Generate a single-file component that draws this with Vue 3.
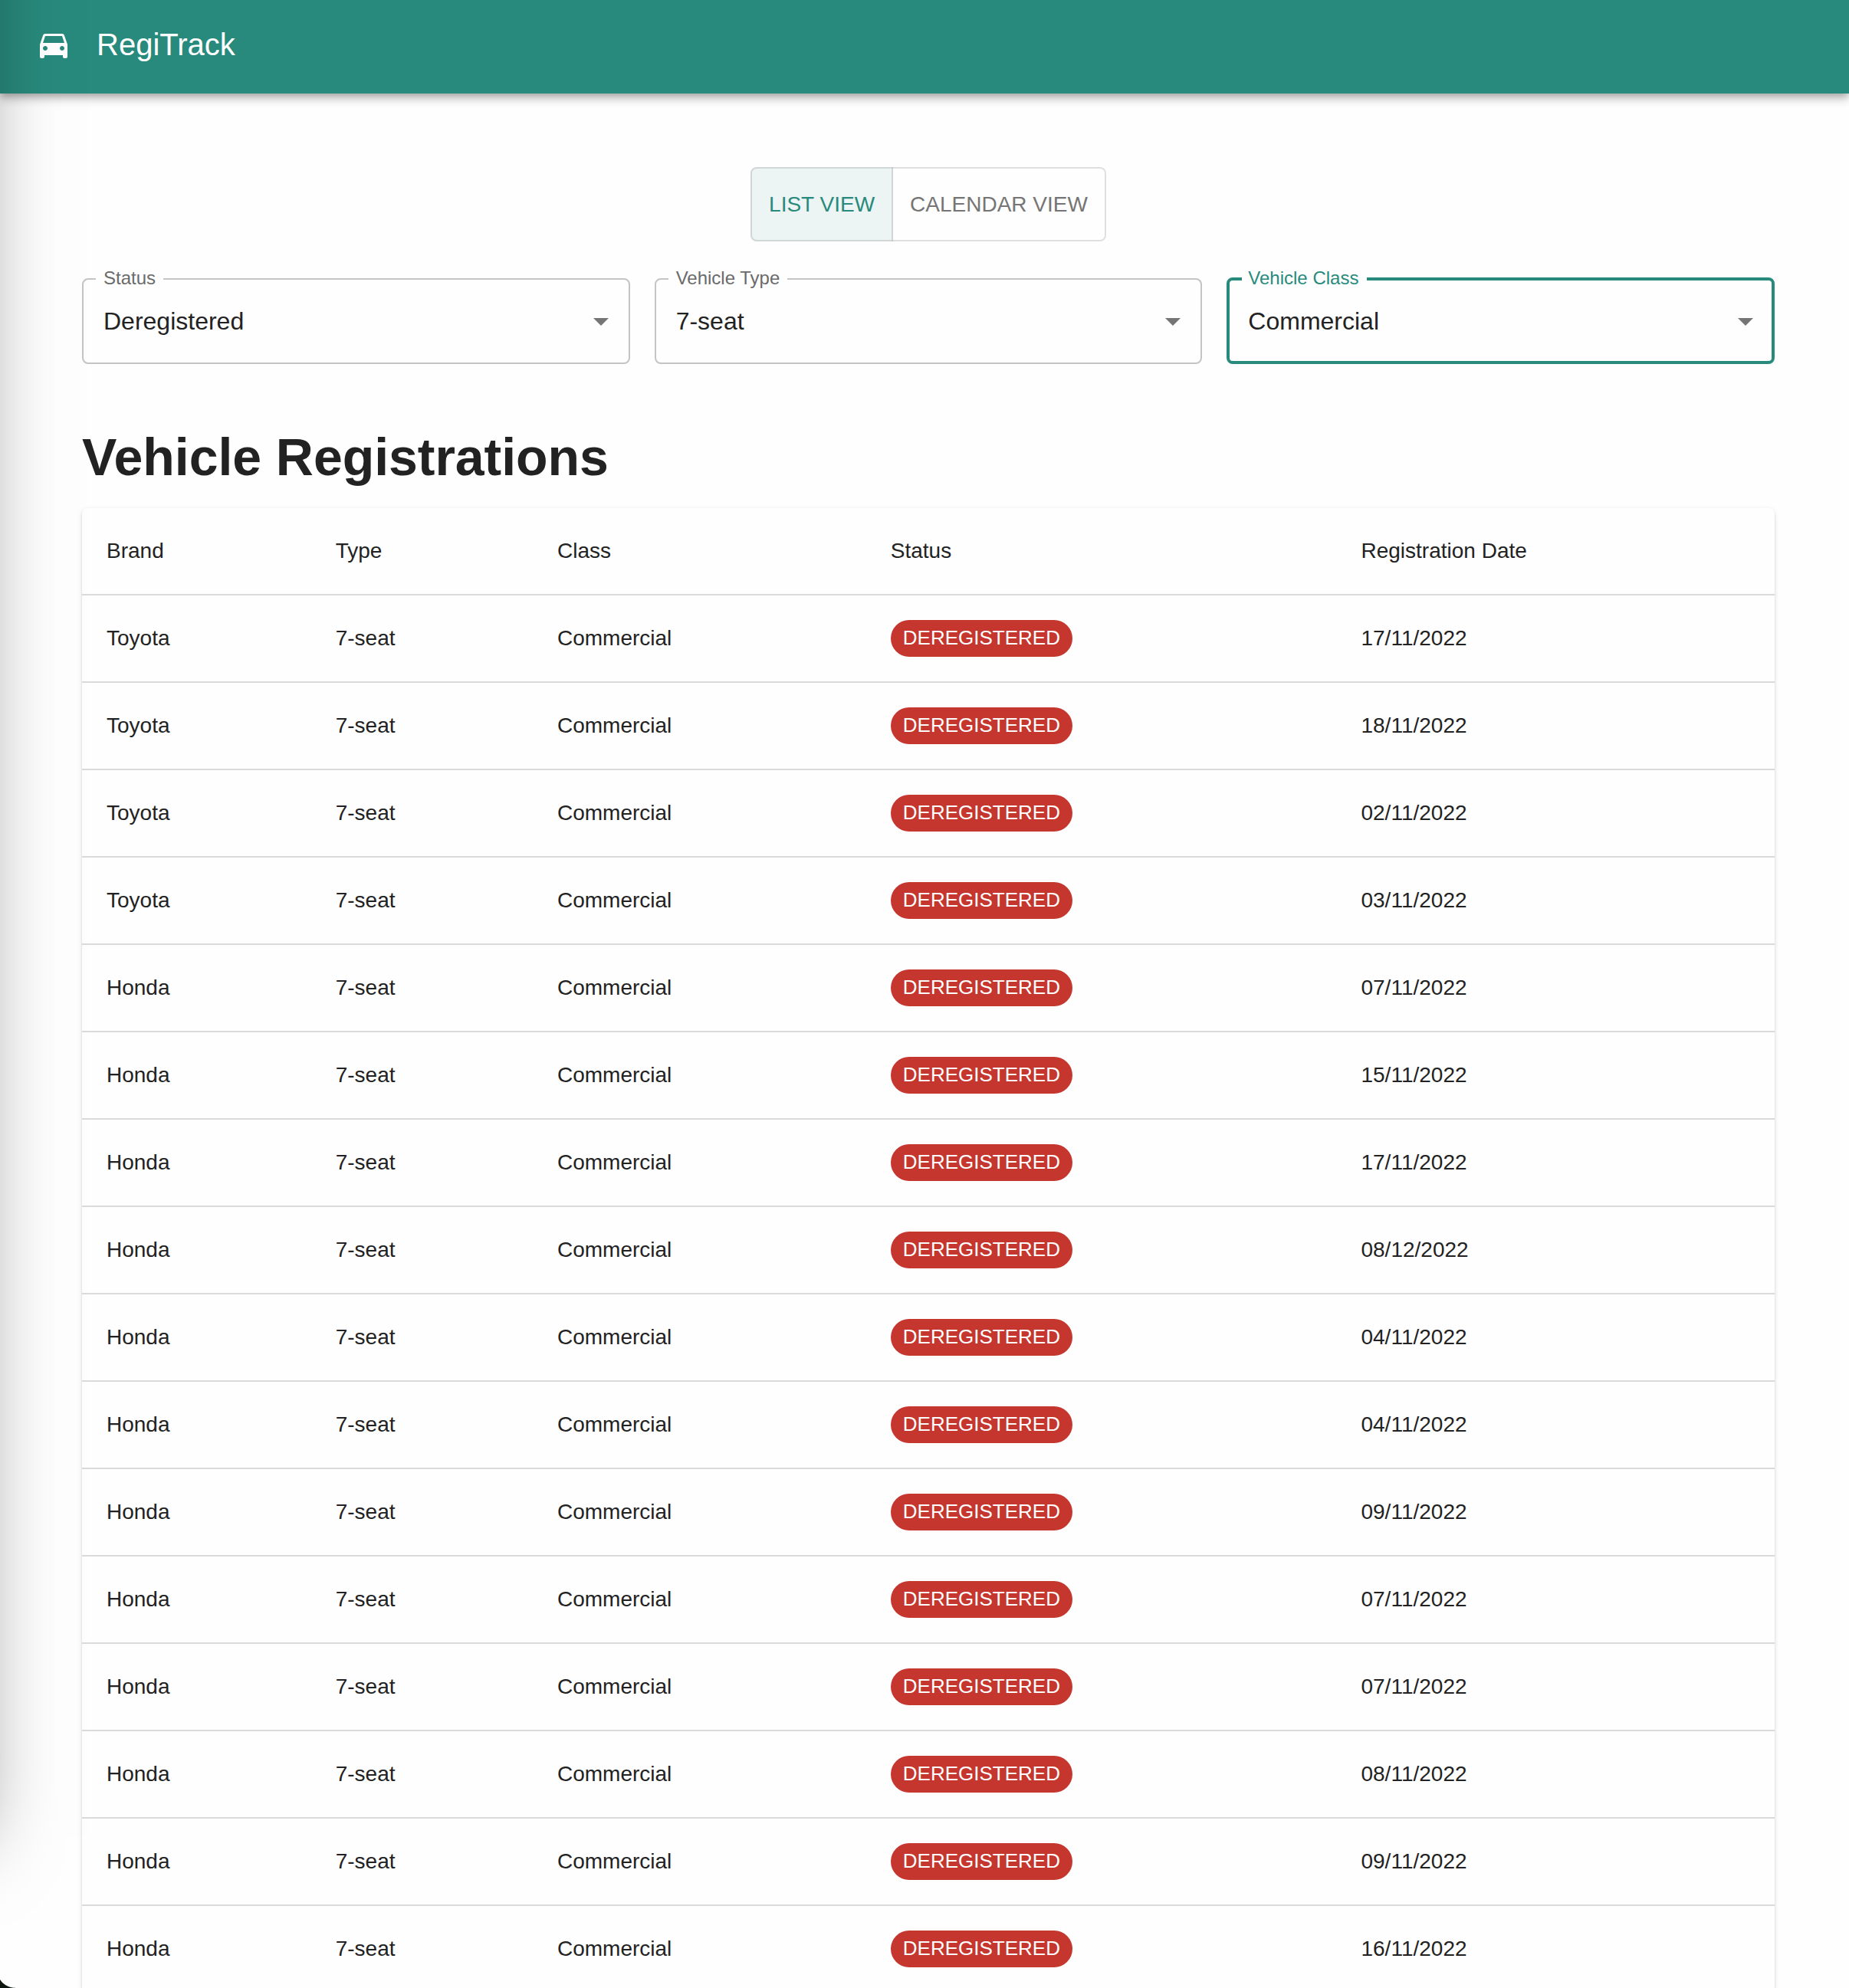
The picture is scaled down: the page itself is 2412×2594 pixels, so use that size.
<script setup>
const filters = [
  { label: 'Status', value: 'Deregistered' },
  { label: 'Vehicle Type', value: '7-seat' },
  { label: 'Vehicle Class', value: 'Commercial', focused: true },
]

const columns = ['Brand', 'Type', 'Class', 'Status', 'Registration Date']

const rows = [
  ['Toyota', '17/11/2022'],
  ['Toyota', '18/11/2022'],
  ['Toyota', '02/11/2022'],
  ['Toyota', '03/11/2022'],
  ['Honda', '07/11/2022'],
  ['Honda', '15/11/2022'],
  ['Honda', '17/11/2022'],
  ['Honda', '08/12/2022'],
  ['Honda', '04/11/2022'],
  ['Honda', '04/11/2022'],
  ['Honda', '09/11/2022'],
  ['Honda', '07/11/2022'],
  ['Honda', '07/11/2022'],
  ['Honda', '08/11/2022'],
  ['Honda', '09/11/2022'],
  ['Honda', '16/11/2022'],
].map(([brand, date]) => ({ brand, date, type: '7-seat', cls: 'Commercial', status: 'DEREGISTERED' }))
</script>

<template>
  <div class="window">
    <header class="app-bar">
      <svg class="car" viewBox="0 0 24 24" aria-hidden="true">
        <path d="M18.92 6.01C18.72 5.42 18.16 5 17.5 5h-11c-.66 0-1.21.42-1.42 1.01L3 12v8c0 .55.45 1 1 1h1c.55 0 1-.45 1-1v-1h12v1c0 .55.45 1 1 1h1c.55 0 1-.45 1-1v-8l-2.08-5.99zM6.5 16c-.83 0-1.5-.67-1.5-1.5S5.67 13 6.5 13s1.5.67 1.5 1.5S7.33 16 6.5 16zm11 0c-.83 0-1.5-.67-1.5-1.5s.67-1.5 1.5-1.5 1.5.67 1.5 1.5-.67 1.5-1.5 1.5zM5 11l1.5-4.5h11L19 11H5z" />
      </svg>
      <span class="app-name">RegiTrack</span>
    </header>

    <main class="content">
      <div class="toggle-group">
        <button class="toggle selected">LIST VIEW</button>
        <button class="toggle">CALENDAR VIEW</button>
      </div>

      <div class="filters">
        <div v-for="f in filters" :key="f.label" class="select" :class="{ focused: f.focused }">
          <fieldset class="outline">
            <legend>{{ f.label }}</legend>
          </fieldset>
          <span class="value">{{ f.value }}</span>
          <svg class="arrow" viewBox="0 0 24 24" aria-hidden="true"><path d="M7 10l5 5 5-5z" /></svg>
        </div>
      </div>

      <h1 class="title">Vehicle Registrations</h1>

      <div class="table">
        <div class="row">
          <div v-for="c in columns" :key="c" class="cell">{{ c }}</div>
        </div>
        <div v-for="(r, i) in rows" :key="i" class="row">
          <div class="cell">{{ r.brand }}</div>
          <div class="cell">{{ r.type }}</div>
          <div class="cell">{{ r.cls }}</div>
          <div class="cell"><span class="chip">{{ r.status }}</span></div>
          <div class="cell">{{ r.date }}</div>
        </div>
      </div>
    </main>

    <div class="side-shadow"></div>
    <div class="corner"></div>
  </div>
</template>

<style>
body {
  margin: 0;
  background: #fff;
}
</style>

<style scoped>
.window {
  position: relative;
  box-sizing: border-box;
  width: 2412px;
  height: 2594px;
  overflow: hidden;
  background: #fefefe;
  color: #222;
  font-family: "Liberation Sans", Arial, sans-serif;
}

.app-bar {
  position: relative;
  display: flex;
  align-items: center;
  box-sizing: border-box;
  height: 122px;
  padding: 0 46px 6px;
  gap: 32px;
  background: #288a7c;
  color: #fff;
  box-shadow: 0 4px 8px -2px rgba(0, 0, 0, 0.2), 0 8px 10px rgba(0, 0, 0, 0.14), 0 2px 20px rgba(0, 0, 0, 0.12);
}

.car {
  width: 48px;
  height: 48px;
  fill: currentColor;
}

.app-name {
  font-size: 40px;
  line-height: 64px;
}

.content {
  padding: 96px 97px 0 107px;
}

.toggle-group {
  display: flex;
  justify-content: center;
  height: 97px;
}

.toggle {
  box-sizing: border-box;
  height: 97px;
  padding: 22px;
  border: 2px solid rgba(0, 0, 0, 0.12);
  border-radius: 0 8px 8px 0;
  background: transparent;
  color: #757575;
  font: 28px/49px "Liberation Sans", Arial, sans-serif;
  letter-spacing: 0;
  white-space: nowrap;
}

.toggle.selected {
  border-radius: 8px 0 0 8px;
  background: rgba(40, 138, 124, 0.08);
  color: #288a7c;
}

.toggle + .toggle {
  margin-left: -2px;
  border-left-color: transparent;
}

.filters {
  display: grid;
  grid-template-columns: repeat(3, 1fr);
  gap: 32px;
  margin-top: 48px;
}

.select {
  position: relative;
  display: flex;
  align-items: center;
  justify-content: space-between;
  height: 112px;
  padding: 0 14px 0 28px;
}

/* The outline lies behind the value; its legend cuts the top border. */
.outline {
  position: absolute;
  inset: -13px 0 0;
  margin: 0;
  padding: 0 16px;
  border: 2px solid #c4c4c4;
  border-radius: 8px;
  min-width: 0;
}

.outline legend {
  padding: 0 10px 2px;
  color: #6a6a6a;
  font-size: 24px;
  line-height: 26px;
}

.focused .outline {
  padding: 0 15.5px;
  border: 4px solid #288a7c;
}

.focused .outline legend {
  padding: 0 11px 2px 8.5px;
  color: #288a7c;
}

.value {
  font-size: 32px;
  line-height: 46px;
}

.arrow {
  width: 48px;
  height: 48px;
  fill: #757575;
}

.title {
  margin: 79px 0 25px;
  font-size: 68px;
  line-height: 84px;
  font-weight: 700;
  letter-spacing: -0.05px;
}

.table {
  border-radius: 8px;
  background: #fefefe;
  box-shadow: 0 4px 2px -2px rgba(0, 0, 0, 0.2), 0 2px 2px rgba(0, 0, 0, 0.14), 0 2px 6px rgba(0, 0, 0, 0.12);
}

.row {
  display: grid;
  grid-template-columns: 298.7px 289.3px 434.8px 613.7px 1fr;
  box-sizing: border-box;
  height: 114px;
  border-bottom: 2px solid #dadada;
}

.cell {
  display: flex;
  align-items: center;
  padding: 0 32px;
  font-size: 28px;
  line-height: 40px;
  white-space: nowrap;
}

.chip {
  box-sizing: border-box;
  height: 48px;
  padding: 0 16px 2px;
  border-radius: 24px;
  background: #c5362e;
  color: #fff;
  font-size: 26px;
  line-height: 46px;
}

/* Soft shade cast by a neighbouring window on the left. */
.side-shadow {
  position: absolute;
  left: -435px;
  top: -400px;
  width: 400px;
  height: 2797px;
  box-shadow: 0 0 100px rgba(0, 0, 0, 0.5);
  pointer-events: none;
}

.corner {
  position: absolute;
  left: 0;
  bottom: 0;
  width: 20px;
  height: 20px;
  background: radial-gradient(circle at 20px -4px, transparent 23.3px, #0c150e 24.3px);
}
</style>
